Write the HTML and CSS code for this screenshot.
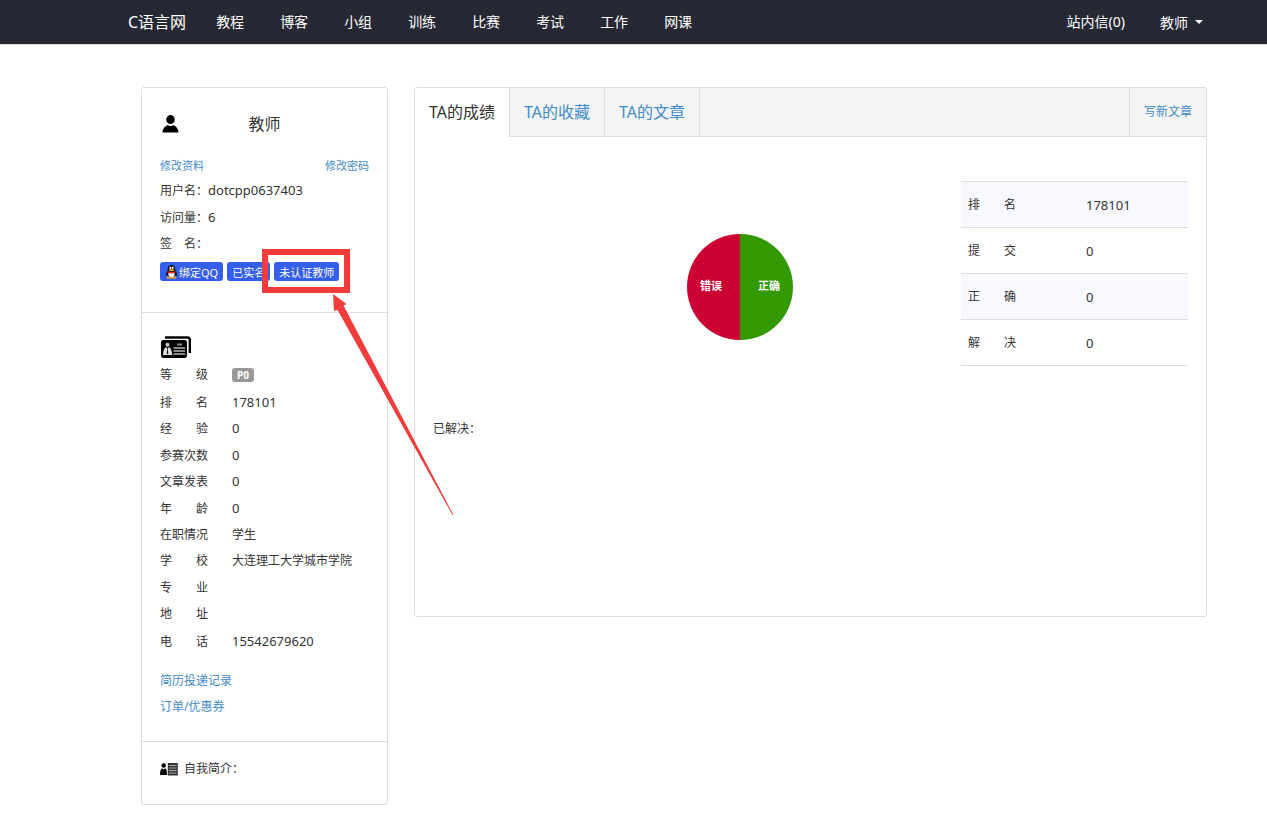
FILE: index.html
```html
<!DOCTYPE html>
<html lang="zh-CN">
<head>
<meta charset="utf-8">
<meta name="viewport" content="width=device-width, initial-scale=1">
<title>C语言网</title>
<link rel="stylesheet" href="styles.css">
</head>
<body>
<header class="navbar">
  <a class="brand" href="#">C语言网</a>
  <nav class="nav-links">
    <a href="#">教程</a>
    <a href="#">博客</a>
    <a href="#">小组</a>
    <a href="#">训练</a>
    <a href="#">比赛</a>
    <a href="#">考试</a>
    <a href="#">工作</a>
    <a href="#">网课</a>
  </nav>
  <div class="nav-user">
    <a href="#">站内信(0)</a>
    <button class="user-menu" type="button">教师<span class="caret"></span></button>
  </div>
</header>

<main class="page">
  <aside class="card profile">
    <section class="profile-head">
      <div class="title-row">
        <svg class="icon-user" viewBox="0 0 17 18" aria-hidden="true">
          <ellipse cx="8.5" cy="4.6" rx="4.3" ry="4.5"/>
          <path d="M0.5 17.5C0.8 13.2 3.4 11 5.6 9.9Q8.500 12 11.400 9.900C13.600 11 16.200 13.200 16.500 17.500Z"/>
        </svg>
        <h1>教师</h1>
      </div>
      <div class="edit-links">
        <a href="#">修改资料</a>
        <a href="#">修改密码</a>
      </div>
      <p>用户名：<span class="num">dotcpp0637403</span></p>
      <p>访问量：<span class="num">6</span></p>
      <p>签　名：</p>
      <div class="badges">
        <button class="badge" type="button">
          <svg class="icon-qq" viewBox="0 0 14 15" aria-hidden="true">
            <ellipse cx="4.500" cy="13.500" rx="3" ry="1.300" fill="#f5a21b"/>
            <ellipse cx="9.500" cy="13.500" rx="3" ry="1.300" fill="#f5a21b"/>
            <path d="M7 0C4.200 0 3 2 3 4.500C3 6 1 8.500 1 10.500C1 12 2 11.500 2.500 11C3.500 14 10.500 14 11.500 11C12 11.500 13 12 13 10.500C13 8.500 11 6 11 4.500C11 2 9.800 0 7 0Z" fill="#111"/>
            <ellipse cx="7" cy="10.300" rx="3.300" ry="3" fill="#fff"/>
            <ellipse cx="5.700" cy="3.300" rx="1" ry="1.400" fill="#fff"/>
            <ellipse cx="8.300" cy="3.300" rx="1" ry="1.400" fill="#fff"/>
            <ellipse cx="7" cy="5.500" rx="2.800" ry="0.900" fill="#f5a21b"/>
            <path d="M2.800 6.500Q7 8.800 11.200 6.500L11.500 8Q7 10 2.500 8Z" fill="#e2231a"/>
          </svg>绑定QQ</button>
        <button class="badge" type="button">已实名</button>
        <button class="badge" type="button">未认证教师</button>
      </div>
    </section>

    <section class="profile-info">
      <svg class="icon-card" viewBox="0 0 30 22" aria-hidden="true">
        <path d="M4 1.500H26.500Q28.800 1.500 28.800 4V17" fill="none" stroke="#000" stroke-width="2.400"/>
        <rect x="0" y="4" width="26" height="18" rx="2.500"/>
        <circle cx="6.500" cy="8.700" r="2" fill="#ccc"/>
        <path d="M2 19Q2.300 12.500 5 11L6.500 13L8 11Q10.900 12.500 11.200 19Z" fill="#ddd"/>
        <path d="M6.500 12L5.700 17L6.500 18.500L7.300 17Z"/>
        <path d="M16 8.500H21M12.500 12H24M12.500 15H24M12.500 18H24" stroke="#888" stroke-width="2"/>
      </svg>
      <dl class="facts">
        <div><dt>等　　级</dt><dd><span class="level">P0</span></dd></div>
        <div><dt>排　　名</dt><dd class="num">178101</dd></div>
        <div><dt>经　　验</dt><dd class="num">0</dd></div>
        <div><dt>参赛次数</dt><dd class="num">0</dd></div>
        <div><dt>文章发表</dt><dd class="num">0</dd></div>
        <div><dt>年　　龄</dt><dd class="num">0</dd></div>
        <div><dt>在职情况</dt><dd>学生</dd></div>
        <div><dt>学　　校</dt><dd>大连理工大学城市学院</dd></div>
        <div><dt>专　　业</dt><dd></dd></div>
        <div><dt>地　　址</dt><dd></dd></div>
        <div><dt>电　　话</dt><dd class="num">15542679620</dd></div>
      </dl>
      <div class="record-links">
        <a href="#">简历投递记录</a>
        <a href="#">订单/优惠券</a>
      </div>
    </section>

    <section class="profile-intro">
      <svg class="icon-intro" viewBox="0 0 18 14" aria-hidden="true">
        <circle cx="3.700" cy="3.500" r="2.300"/>
        <path d="M0 13Q0 7 2.200 6.300L3.700 7.500L5.200 6.300Q7 7 7 13Z"/>
        <rect x="7.800" y="1" width="10" height="12.500" fill="#333"/>
        <path d="M9 3.500H16.500M9 6H16.500M9 8.500H16.500M9 11H16.500" stroke="#aaa"/>
      </svg>
      <h2>自我简介：</h2>
    </section>

    <svg class="callout" viewBox="0 0 193 268" aria-hidden="true">
      <rect x="3" y="3" width="82" height="38" fill="none" stroke="#f23c3c" stroke-width="6"/>
      <path d="M71 45L84.500 55L81.500 56.500L191.500 266L190.500 266L75.500 61L72 62Z" fill="#f23c3c"/>
    </svg>
  </aside>

  <section class="card results">
    <nav class="tabs">
      <a class="tab active" href="#">TA的成绩</a>
      <a class="tab" href="#">TA的收藏</a>
      <a class="tab" href="#">TA的文章</a>
      <a class="write" href="#">写新文章</a>
    </nav>
    <div class="results-body">
      <div class="chart">
        <svg class="pie" viewBox="0 0 106 106" role="img" aria-label="错误 正确">
          <path d="M53 0A53 53 0 0 0 53 106Z" fill="#cc0033"/>
          <path d="M53 0A53 53 0 0 1 53 106Z" fill="#339900"/>
          <path d="M53 0V106" stroke="#8a5a1a"/>
          <text x="24" y="56">错误</text>
          <text x="82" y="56">正确</text>
        </svg>
      </div>
      <table class="stats">
        <tbody>
          <tr><th scope="row">排　　名</th><td class="num">178101</td></tr>
          <tr><th scope="row">提　　交</th><td class="num">0</td></tr>
          <tr><th scope="row">正　　确</th><td class="num">0</td></tr>
          <tr><th scope="row">解　　决</th><td class="num">0</td></tr>
        </tbody>
      </table>
    </div>
    <p class="solved">已解决：</p>
  </section>
</main>
</body>
</html>
```
FILE: styles.css
```css
* { box-sizing: border-box; }

body {
  margin: 0;
  background: #fff;
  color: #333;
  font: 12px/26px "Noto Sans", "Noto Sans CJK SC", sans-serif;
}

h1, h2, p, dl, dd { margin: 0; font-weight: 400; }
a { color: #428bca; text-decoration: none; }
button { border: 0; font-family: inherit; cursor: pointer; }
svg { display: block; }

.navbar {
  display: flex;
  align-items: center;
  height: 45px;
  padding: 0 64px 0 128px;
  background: #262833;
  border-bottom: 1px solid #d5d5d8;
  font-size: 14px;
}
.navbar a, .user-menu { color: #fff; }
.navbar .brand { font-size: 16px; }
.nav-links { display: flex; gap: 36px; margin-left: 30px; }
.nav-user { display: flex; align-items: center; gap: 35px; margin-left: auto; }
.user-menu {
  display: flex;
  align-items: center;
  gap: 7px;
  padding: 0;
  background: none;
  font-size: 14px;
}
.caret {
  border: 4px solid transparent;
  border-top-color: #fff;
  border-bottom: 0;
}

.page {
  display: grid;
  grid-template-columns: 247px minmax(0, 1fr);
  gap: 26px;
  align-items: start;
  padding: 42px 60px 8px 141px;
}
.card {
  border: 1px solid #ddd;
  border-radius: 3px;
}

.profile { position: relative; }
.profile section + section { border-top: 1px solid #ddd; }
.profile-head { padding: 18px 18px 31px; }
.title-row {
  display: grid;
  grid-template-columns: 24px 1fr 24px;
  align-items: center;
  height: 36px;
  margin-bottom: 16px;
}
.title-row h1 { font-size: 16px; text-align: center; }
.icon-user { width: 17px; height: 18px; margin-left: 2px; }
.edit-links {
  display: flex;
  justify-content: space-between;
  margin-bottom: 3px;
  font-size: 11px;
  line-height: 16px;
}
.num { font-size: 13px; }
.badges { display: flex; gap: 4px; margin-top: 5px; }
.badge {
  display: flex;
  align-items: center;
  height: 19px;
  padding: 0 5px;
  border-radius: 3px;
  background: #345eec;
  color: #fff;
  font-size: 11px;
  white-space: nowrap;
}
.icon-qq { width: 13px; height: 14px; margin-right: 1px; }

.profile-info { padding: 23px 18px 21px; }
.icon-card { width: 30px; height: 22px; margin: 0 0 4px 1px; }
.facts {
  display: flex;
  flex-direction: column;
  justify-content: space-between;
  min-height: 292px;
  margin-bottom: 14px;
}
.facts div { display: flex; align-items: baseline; height: 26px; }
.facts dt { width: 72px; }
.level {
  display: inline-block;
  padding: 0 5px;
  border-radius: 3px;
  background: #999;
  color: #fff;
  font-size: 10px;
  font-weight: 700;
  line-height: 14px;
}
.record-links { display: flex; flex-direction: column; align-items: start; }
.profile-intro {
  display: flex;
  align-items: center;
  gap: 6px;
  padding: 14px 18px 22px;
}
.profile-intro h2 { font-size: 12px; }
.icon-intro { width: 18px; height: 14px; }

.callout {
  position: absolute;
  top: 161px;
  left: 120px;
  width: 193px;
  height: 268px;
  pointer-events: none;
}

.results { min-height: 530px; }
.tabs {
  display: flex;
  height: 49px;
  background: #f4f4f4;
  border-bottom: 1px solid #ddd;
  font-size: 16px;
  line-height: 48px;
}
.tab { padding: 0 14px; border-right: 1px solid #ddd; }
.tab.active { height: 49px; background: #fff; color: #333; }
.write {
  margin-left: auto;
  padding: 0 14px;
  border-left: 1px solid #ddd;
  font-size: 12px;
}
.results-body {
  display: grid;
  grid-template-columns: minmax(0, 1fr) 227px;
  padding: 44px 18px 0;
}
.chart { padding: 53px 0 0 85px; }
.pie { width: 106px; height: 106px; margin: 0 auto; }
.pie text {
  fill: #fff;
  font-size: 11px;
  font-weight: 700;
  text-anchor: middle;
}
.stats {
  width: 100%;
  border-collapse: collapse;
  border-bottom: 1px solid #ddd;
}
.stats th, .stats td {
  height: 46px;
  padding: 0 7px;
  border-top: 1px solid #ddd;
  font-weight: 400;
  text-align: left;
}
.stats th { width: 118px; }
.stats tr:nth-child(odd) { background: #f8f8ff; }
.solved { margin: 50px 18px 0; }
```
